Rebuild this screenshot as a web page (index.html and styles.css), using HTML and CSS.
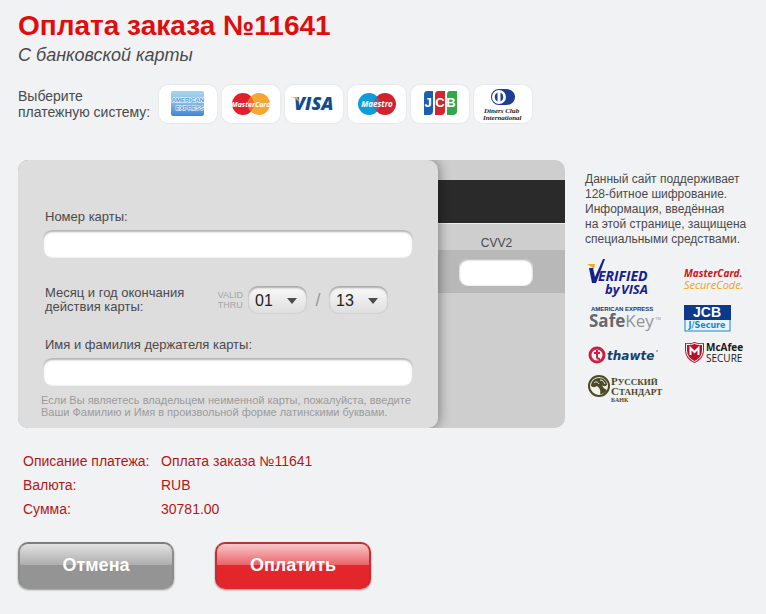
FILE: index.html
```html
<!DOCTYPE html>
<html lang="ru">
<head>
  <meta charset="UTF-8">
  <meta name="viewport" content="width=device-width, initial-scale=1.0">
  <title>Оплата заказа №11641</title>
  <link rel="stylesheet" href="styles.css">
</head>
<body>
  <form class="page">
    <h1>Оплата заказа №11641</h1>
    <p class="subtitle">С банковской карты</p>

    <div class="systems">
      <p class="systems-label">Выберите<br>платежную систему:</p>
      <div class="systems-list">
        <button type="button" class="system" aria-label="American Express">
          <svg width="58" height="38" viewBox="0 0 58 38">
            <defs>
              <linearGradient id="amex" x1="0" y1="0" x2="0" y2="1">
                <stop offset="0" stop-color="#a5d3f0"/>
                <stop offset="0.4" stop-color="#8fc1ea"/>
                <stop offset="1" stop-color="#3f86d2"/>
              </linearGradient>
            </defs>
            <rect x="12" y="6" width="33" height="25" rx="2" fill="url(#amex)"/>
            <g class="amex-text">
              <text x="45" y="17">AMERICAN</text>
              <text x="45" y="25">EXPRESS</text>
            </g>
          </svg>
        </button>
        <button type="button" class="system" aria-label="MasterCard">
          <svg width="58" height="38" viewBox="0 0 58 38">
            <circle cx="21" cy="19" r="11" fill="#e01f2b"/>
            <circle cx="37" cy="19" r="11" fill="#f6a733"/>
            <path d="M29 11.5a11 11 0 0 0 0 15 11 11 0 0 0 0-15z" fill="#ee6a2c"/>
            <text class="circle-text" x="29" y="22" font-size="7">MasterCard</text>
          </svg>
        </button>
        <button type="button" class="system" aria-label="Visa">
          <svg width="58" height="38" viewBox="0 0 58 38">
            <text class="visa-text" x="9" y="25">VISA</text>
            <path d="M7 12h5.500l2.500 7c-1.500-3-4-5.500-8-7z" fill="#f2a33a"/>
          </svg>
        </button>
        <button type="button" class="system" aria-label="Maestro">
          <svg width="58" height="38" viewBox="0 0 58 38">
            <circle cx="21" cy="19" r="11" fill="#0c9ddd"/>
            <circle cx="37" cy="19" r="11" fill="#d1222e"/>
            <path d="M29 11.500a11 11 0 0 0 0 15 11 11 0 0 0 0-15z" fill="#7c5b90"/>
            <text class="circle-text" x="29" y="22" font-size="8">Maestro</text>
          </svg>
        </button>
        <button type="button" class="system" aria-label="JCB">
          <svg width="58" height="38" viewBox="0 0 58 38">
            <path d="M16 6h6v20q0 4-4 4h-5V10q0-4 3-4z" fill="#1b5fae"/>
            <path d="M27 6h7v20q0 4-4 4h-6V10q0-4 3-4z" fill="#d0282e"/>
            <path d="M39 6h7v20q0 4-4 4h-6V10q0-4 3-4z" fill="#36a64a"/>
            <g class="jcb-text">
              <text x="17" y="22">J</text>
              <text x="29" y="22">C</text>
              <text x="40" y="22">B</text>
            </g>
          </svg>
        </button>
        <button type="button" class="system" aria-label="Diners Club International">
          <svg width="58" height="38" viewBox="0 0 58 38">
            <path d="M25 4h7c12 0 12 16 0 16h-7z" fill="#1c3f93"/>
            <circle cx="25" cy="12" r="8" fill="#1c3f93"/>
            <circle cx="25" cy="12" r="7" fill="#fff"/>
            <path d="M23.500 7.500a5 5 0 0 0 0 9zM26.500 7.500a5 5 0 0 1 0 9z" fill="#1c3f93"/>
            <g class="diners-text">
              <text x="10" y="28">Diners Club</text>
              <text x="9" y="35">International</text>
            </g>
          </svg>
        </button>
      </div>
    </div>

    <div class="main">
      <div class="card">
        <div class="card-front">
          <label class="field-label" for="number">Номер карты:</label>
          <input class="field" type="text" id="number">

          <div class="expiry">
            <label class="field-label" for="month">Месяц и год окончания<br>действия карты:</label>
            <div class="expiry-controls">
              <span class="valid">VALID<br>THRU</span>
              <span class="select">
                <select id="month">
                  <option>01</option>
                  <option>02</option>
                  <option>03</option>
                  <option>04</option>
                  <option>05</option>
                  <option>06</option>
                  <option>07</option>
                  <option>08</option>
                  <option>09</option>
                  <option>10</option>
                  <option>11</option>
                  <option>12</option>
                </select>
              </span>
              <span class="slash">/</span>
              <span class="select">
                <select id="year" aria-label="Год">
                  <option>13</option>
                  <option>14</option>
                  <option>15</option>
                  <option>16</option>
                  <option>17</option>
                </select>
              </span>
            </div>
          </div>

          <label class="field-label" for="holder">Имя и фамилия держателя карты:</label>
          <input class="field" type="text" id="holder">
          <p class="hint">Если Вы являетесь владельцем неименной карты, пожалуйста, введите Ваши Фамилию и Имя в произвольной форме латинскими буквами.</p>
        </div>
        <div class="card-back">
          <div class="stripe"></div>
          <label class="cvv-label" for="cvv">CVV2</label>
          <div class="cvv-band">
            <input class="field" type="text" id="cvv">
          </div>
        </div>
      </div>

      <div class="security">
        <p class="security-text">Данный сайт поддерживает<br>128-битное шифрование.<br>Информация, введённая<br>на этой странице, защищена<br>специальными средствами.</p>
        <div class="logos">
          <svg width="80" height="38" viewBox="0 0 80 38">
            <path d="M2 5h8l-1 5q-3-3-7-5z" fill="#f0a824"/>
            <path d="M4 9h4l2 9L18 0h2L11 24H7z" fill="#14218c"/>
            <g class="verified">
              <text x="13" y="22" font-size="14">ERIFIED</text>
              <text x="20" y="35" font-size="13">by</text>
              <text x="36" y="35" font-size="13">VISA</text>
            </g>
          </svg>
          <svg width="70" height="38" viewBox="0 0 70 38">
            <g class="secure-code">
              <text x="0" y="18" font-size="10" font-weight="bold" fill="#c8141c">MasterCard.</text>
              <text x="0" y="30" font-size="11" fill="#f0a020">SecureCode.</text>
            </g>
          </svg>
          <svg width="80" height="28" viewBox="0 0 80 28">
            <text class="amex-small" x="6" y="6">AMERICAN EXPRESS</text>
            <text class="safekey" x="4" y="22"><tspan font-weight="bold" fill="#66686b">Safe</tspan><tspan fill="#939598">Key</tspan></text>
            <text x="70" y="15" font-size="4" fill="#939598">TM</text>
          </svg>
          <svg width="70" height="28" viewBox="0 0 70 28">
            <rect x="1" y="1" width="45" height="25" fill="#e9f5fc" stroke="#1c86c8"/>
            <path d="M0 0h47v15H0z" fill="#0a3a8c"/>
            <text class="jcb-small" x="23" y="12">JCB</text>
            <text class="jsecure" x="23" y="23">J/Secure</text>
          </svg>
          <svg width="80" height="24" viewBox="0 0 80 24">
            <circle cx="12" cy="14" r="7" fill="none" stroke="#cc1f45" stroke-width="3"/>
            <path d="M12 9v7q0 2 3 2M9 12h6" fill="none" stroke="#cc1f45" stroke-width="2"/>
            <text class="thawte" x="22" y="19">thawte</text>
            <circle cx="72" cy="10" r="1" fill="#8aa0b8"/>
          </svg>
          <svg width="70" height="24" viewBox="0 0 70 24">
            <path d="M1 2q5 1 9.500-1Q15 3 20 2v7q0 9-9.500 13Q1 18 1 9z" fill="#b5122b"/>
            <path d="M2.500 3.500q4 .6 8-1 4 1.600 8 1V9q0 8-8 11.500-8-3.500-8-11.500z" fill="none" stroke="#fff"/>
            <path d="M6.500 14V7l4 4 4-4v7" fill="none" stroke="#fff" stroke-width="2"/>
            <g class="mcafee">
              <text x="22" y="10" font-weight="bold">McAfee</text>
              <text x="22" y="21">SECURE</text>
            </g>
          </svg>
          <svg width="80" height="34" viewBox="0 0 80 34">
            <circle cx="14" cy="13" r="10" fill="#f2f1e8" stroke="#4c4828" stroke-width="2"/>
            <path d="M6 13c0-5 4-8 8-8 5 0 8 3 8 7-2 2-4 1-5 0 1 3 3 4 5 5-2 3-4 4-7 4 1-3 0-6-3-8-2 1-3 2-6 0z" fill="#4c4828"/>
            <path d="M9 10c2-2 4-1 5 1M15 7c3 0 4 2 5 4M8 18c2-2 3-1 4 2" fill="none" stroke="#f2f1e8"/>
            <g class="russtandart">
              <text x="26" y="12"><tspan font-size="11">Р</tspan>УССКИЙ</text>
              <text x="26" y="22"><tspan font-size="11">С</tspan>ТАНДАРТ</text>
              <text x="26" y="29" font-size="6">БАНК</text>
            </g>
          </svg>
        </div>
      </div>
    </div>

    <table class="details">
      <tr>
        <th scope="row">Описание платежа:</th>
        <td>Оплата заказа №11641</td>
      </tr>
      <tr>
        <th scope="row">Валюта:</th>
        <td>RUB</td>
      </tr>
      <tr>
        <th scope="row">Сумма:</th>
        <td>30781.00</td>
      </tr>
    </table>

    <div class="actions">
      <button type="button" class="btn btn-cancel">Отмена</button>
      <button type="submit" class="btn btn-pay">Оплатить</button>
    </div>
  </form>
</body>
</html>
```
FILE: styles.css
```css
* {
  box-sizing: border-box;
}

body {
  margin: 0;
  background-color: #f0f2f4;
  color: #4a4a4c;
  font-family: "Liberation Sans", Arial, sans-serif;
}

p, h1 {
  margin: 0;
}

.page {
  padding: 10px 10px 24px 18px;
}

h1 {
  font-size: 28px;
  line-height: 32px;
  color: #e00d0d;
}

.subtitle {
  margin-top: 2px;
  font-size: 18px;
  line-height: 22px;
  font-style: italic;
}

/* payment systems */
.systems {
  display: flex;
  align-items: center;
  gap: 5px;
  margin-top: 19px;
}

.systems-label {
  font-size: 14px;
  line-height: 16px;
  min-width: 136px;
}

.systems-list {
  display: flex;
  flex-wrap: wrap;
  gap: 5px;
}

.system {
  display: flex;
  padding: 0;
  border: none;
  border-radius: 9px;
  background-color: #fff;
  box-shadow: 0 0 1px 1px #e8e9ea;
  cursor: pointer;
}

.amex-text {
  font-size: 6px;
  font-weight: bold;
  text-anchor: end;
  fill: #4f93d6;
  stroke: #fff;
  stroke-width: 1px;
  paint-order: stroke;
}

.circle-text {
  font-family: "Open Sans", sans-serif;
  font-weight: bold;
  font-style: italic;
  text-anchor: middle;
  fill: #fff;
}

.visa-text {
  font-family: "Open Sans", sans-serif;
  font-size: 18px;
  font-weight: 800;
  font-style: italic;
  fill: #0e4c94;
}

.jcb-text {
  font-size: 13px;
  font-weight: bold;
  text-anchor: middle;
  fill: #fff;
}

.diners-text {
  font-family: "Liberation Serif", serif;
  font-size: 7px;
  font-style: italic;
  font-weight: bold;
  fill: #222;
}

/* card */
.main {
  display: grid;
  grid-template-columns: minmax(0, 547px) minmax(164px, 1fr);
  gap: 20px;
  margin-top: 37px;
}

.card {
  display: flex;
  overflow: hidden;
  border-radius: 10px;
  background-color: #cecece;
}

.card-front {
  position: relative;
  z-index: 1;
  flex: 1;
  padding: 50px 25px 10px;
  border-radius: 10px;
  background-color: #dddddd;
  box-shadow: 1px 0 12px rgba(0, 0, 0, 0.4);
}

.field-label {
  display: block;
  padding-left: 2px;
  font-size: 13px;
  line-height: 14px;
}

.field {
  display: block;
  width: 100%;
  height: 28px;
  margin-top: 6px;
  padding: 0 10px;
  border: none;
  border-radius: 9px;
  background-color: #fff;
  box-shadow: inset 0 2px 2px #b4b4b4, inset 0 0 2px #ccc;
  font-family: inherit;
  font-size: 16px;
}

.expiry {
  display: flex;
  justify-content: space-between;
  align-items: center;
  margin: 28px 25px 24px 0;
}

.expiry-controls {
  display: flex;
  align-items: center;
}

.valid {
  margin-right: 5px;
  font-size: 9px;
  line-height: 10px;
  color: #a5a5a5;
}

.select {
  position: relative;
}

.select::after {
  content: "";
  position: absolute;
  top: 12px;
  right: 10px;
  border: 5px solid transparent;
  border-top: 6px solid #4c4c4c;
  border-bottom: none;
  pointer-events: none;
}

.select select {
  appearance: none;
  display: block;
  width: 59px;
  height: 28px;
  padding: 0 7px;
  border: none;
  border-radius: 10px;
  background: linear-gradient(#fafafa, #dedede);
  box-shadow: inset 0 2px 2px #aaa, inset 0 0 2px #bbb;
  font-family: inherit;
  font-size: 16px;
  color: #222;
}

.slash {
  width: 22px;
  text-align: center;
  font-size: 18px;
  line-height: 18px;
  color: #999;
}

.hint {
  margin: 8px -10px 0 -2px;
  font-size: 11px;
  line-height: 12px;
  color: #9b9b9b;
}

.card-back {
  width: 127px;
  padding-top: 20px;
}

.stripe {
  height: 44px;
  border-bottom: 1px solid #eee;
  background-color: #2a2a2a;
}

.cvv-label {
  display: block;
  padding: 12px 10px 0 0;
  font-size: 12px;
  line-height: 14px;
  text-align: center;
}

.cvv-band {
  padding: 8px 32px 7px 21px;
  background-color: #b8b8b8;
}

.cvv-band .field {
  margin-top: 0;
}

/* security */
.security-text {
  margin-top: 12px;
  font-size: 12px;
  line-height: 15px;
  white-space: nowrap;
}

.logos {
  display: grid;
  grid-template-columns: 80px 70px;
  column-gap: 19px;
  row-gap: 8px;
  margin-top: 12px;
}

.verified {
  font-family: "Open Sans", sans-serif;
  font-weight: bold;
  font-style: italic;
  fill: #14218c;
}

.secure-code {
  font-family: "Open Sans", sans-serif;
  font-style: italic;
}

.amex-small {
  font-size: 6px;
  font-weight: bold;
  fill: #1f3266;
}

.safekey {
  font-family: "Open Sans", sans-serif;
  font-size: 17px;
}

.jcb-small {
  font-size: 14px;
  font-weight: bold;
  text-anchor: middle;
  fill: #fff;
}

.jsecure {
  font-family: "DejaVu Sans", sans-serif;
  font-size: 8px;
  font-weight: bold;
  text-anchor: middle;
  fill: #1c86c8;
}

.thawte {
  font-family: "DejaVu Sans", sans-serif;
  font-size: 12px;
  font-weight: bold;
  font-style: italic;
  fill: #14406f;
}

.mcafee {
  font-family: "Open Sans", sans-serif;
  font-size: 10px;
  fill: #1a1a1a;
}

.russtandart {
  font-family: "Liberation Serif", serif;
  font-size: 9px;
  font-weight: bold;
  fill: #4c4828;
}

/* payment details */
.details {
  margin-top: 21px;
  margin-left: 5px;
  border-collapse: collapse;
  font-size: 14px;
  line-height: 24px;
  color: #b01818;
}

.details th,
.details td {
  padding: 0;
  font-weight: normal;
  text-align: left;
}

.details th {
  min-width: 138px;
}

.actions {
  display: flex;
  flex-wrap: wrap;
  gap: 41px;
  margin-top: 21px;
}

.btn {
  width: 156px;
  height: 47px;
  padding: 0;
  border: 2px solid;
  border-radius: 10px;
  box-shadow: 0 1px 2px rgba(0, 0, 0, 0.4);
  font-family: inherit;
  font-size: 18px;
  font-weight: bold;
  color: #fff;
  cursor: pointer;
}

.btn-cancel {
  border-color: #7e7e7e #8c8c8c #949494;
  background: linear-gradient(#e2e2e2, #adadad 49%, #949494 50%);
}

.btn-pay {
  border-color: #bb3038 #cc2a30 #e3262b;
  background: linear-gradient(#f8c8ca, #ea6266 49%, #e3262b 50%);
}
```
